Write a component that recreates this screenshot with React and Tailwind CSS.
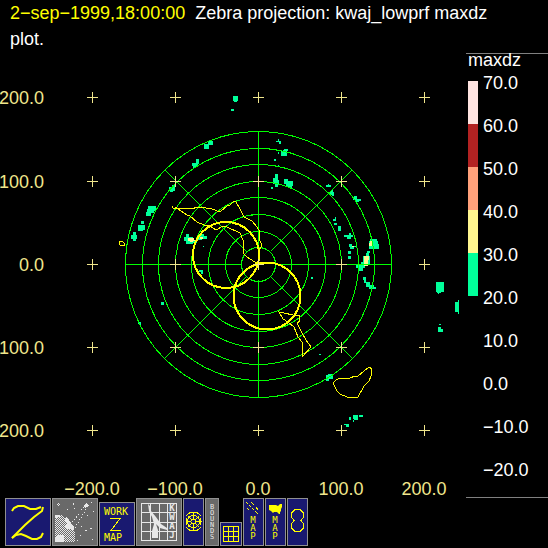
import React from 'react';

const TICKS_X = [92, 175, 258, 341, 424];
const TICKS_Y = [97, 181, 264, 347, 430];
const X_LABELS = ['−200.0', '−100.0', '0.0', '100.0', '200.0'];
const Y_LABELS = ['200.0', '100.0', '0.0', '100.0', '200.0'];
const RINGS = [17, 33, 50, 67, 83, 100, 116, 133];

const LEGEND = ['70.0', '60.0', '50.0', '40.0', '30.0', '20.0', '10.0', '0.0', '−10.0', '−20.0'];

// echo cells: x, y, width, height
const ECHOES = [
  [233, 96, 5, 5], [234, 101, 3, 1], [231, 109, 3, 2],
  [208, 141, 5, 4], [204, 144, 5, 5],
  [196, 159, 3, 5], [192, 163, 6, 3], [193, 166, 3, 2],
  [172, 185, 3, 4], [169, 187, 6, 4], [170, 191, 3, 1],
  [148, 206, 8, 5], [147, 209, 7, 4], [146, 212, 5, 4],
  [141, 221, 3, 3], [138, 225, 7, 5], [138, 230, 5, 1],
  [133, 232, 3, 3], [131, 235, 6, 4], [133, 238, 3, 3],
  [186, 234, 3, 3], [184, 237, 9, 4], [186, 240, 7, 4], [193, 240, 4, 3],
  [201, 234, 3, 3], [199, 236, 8, 3], [198, 238, 4, 2], [203, 246, 1, 1],
  [278, 139, 1, 3], [276, 141, 5, 1], [279, 142, 2, 2],
  [284, 149, 4, 2], [281, 151, 6, 5], [283, 150, 4, 5], [278, 152, 1, 2],
  [274, 159, 2, 2], [278, 165, 1, 2],
  [275, 174, 3, 4], [273, 178, 5, 6], [275, 184, 3, 3], [278, 180, 1, 5], [271, 187, 2, 2],
  [284, 179, 4, 5], [286, 181, 7, 5], [288, 185, 4, 3],
  [328, 184, 1, 1], [326, 185, 5, 2], [331, 190, 2, 2], [330, 192, 4, 3], [332, 195, 2, 1],
  [354, 196, 3, 1], [353, 197, 4, 3], [356, 199, 5, 2], [355, 200, 4, 2],
  [335, 217, 1, 2], [333, 219, 3, 2], [334, 223, 3, 2], [338, 226, 3, 5],
  [349, 233, 2, 2], [344, 235, 5, 2], [348, 235, 5, 2], [347, 237, 4, 2],
  [349, 244, 3, 2], [349, 246, 7, 1], [350, 246, 4, 3], [348, 251, 3, 3], [348, 256, 3, 3],
  [370, 239, 7, 3], [369, 241, 9, 4], [369, 245, 8, 4], [375, 244, 4, 5],
  [367, 251, 3, 2], [366, 253, 3, 4], [363, 256, 7, 8],
  [356, 264, 9, 4], [358, 267, 5, 4], [361, 262, 8, 3],
  [363, 277, 3, 3], [364, 280, 2, 3], [366, 282, 4, 5], [369, 285, 5, 4], [372, 287, 4, 2],
  [311, 277, 2, 2], [319, 354, 2, 1],
  [328, 374, 5, 2], [326, 375, 7, 4], [326, 379, 3, 2],
  [199, 270, 4, 2], [201, 272, 2, 2], [161, 302, 3, 3], [138, 323, 2, 1], [139, 322, 2, 3],
  [436, 282, 8, 10], [437, 292, 4, 1], [438, 293, 1, 1],
  [455, 302, 3, 10], [458, 300, 1, 14],
  [439, 324, 2, 1], [438, 327, 3, 5], [441, 329, 2, 3],
  [353, 415, 5, 4], [354, 419, 4, 1], [353, 420, 1, 2], [359, 415, 4, 2], [349, 417, 2, 3],
  [344, 424, 5, 1], [346, 425, 3, 2],
];

const STRONG_ECHOES = [
  [188, 238, 6, 3], [190, 240, 3, 2], [200, 237, 3, 2], [194, 240, 2, 1],
  [352, 246, 2, 1], [370, 241, 3, 4], [369, 243, 4, 3],
  [364, 256, 5, 4], [364, 260, 4, 6], [366, 256, 2, 5],
];

const COASTS = [
  'M172 206L173 208L177 208L190 209L199 207L212 209L220 212L227 206L230 205L234 201L236 202L240 209L244 217L252 221L257 227L260 232L259 238L262 246L259 250',
  'M175 207L187 215L190 216L197 222L204 225L210 226L216 230L223 226L227 227L240 233L243 240L243 253L247 257L258 264',
  'M119 242L121 241L123 242L125 244L124 246L120 245Z',
  'M279 312L284 313L293 315L299 315L300 321L297 323L301 331L306 340L311 347L302 357L302 342L298 337L294 327L288 322L283 319Z',
  'M333 383L336 380L340 378L350 378L355 376L357 377L364 371L369 367L372 369L371 376L369 381L364 386L358 397L347 397L340 394L337 391Z',
];

const Cells = ({ data, fill }) => (
  <g fill={fill}>
    {data.map(([x, y, w, h], i) => (
      <rect key={i} x={x} y={y} width={w} height={h} />
    ))}
  </g>
);

const RadarPlot = () => (
  <svg
    viewBox="0 52 466 446"
    className="block w-full font-['Liberation_Sans',Arial,sans-serif] text-[18px]"
    shapeRendering="crispEdges"
    role="img"
    aria-label="Radar plot"
  >
    <Cells data={ECHOES} fill="#00ff9a" />
    <Cells data={STRONG_ECHOES} fill="#fff68f" />

    <g stroke="#00ff00" fill="none">
      {RINGS.map((r) => (
        <circle key={r} cx="258.5" cy="264.5" r={r} />
      ))}
      <path d="M258.5 131V248M258.5 280V398M125 264.5H242M275 264.5H392" />
      <path d="M165 170L247 252M352 170L271 251M165 358L247 276M352 358L271 277" />
    </g>

    <g stroke="#ffff00" fill="none">
      {COASTS.map((d) => (
        <path key={d} d={d} />
      ))}
      <circle cx="226" cy="255" r="33" strokeWidth="2" />
      <circle cx="267" cy="296" r="33.5" strokeWidth="2" />
    </g>

    <g stroke="#f0e68c">
      {TICKS_Y.map((y) =>
        TICKS_X.map((x) => (
          <path key={`${x}-${y}`} d={`M${x - 5} ${y + 0.5}h11M${x + 0.5} ${y - 5}v11`} />
        ))
      )}
    </g>

    <g fill="#f0e68c">
      {Y_LABELS.map((label, i) => (
        <text key={i} x="44" y={TICKS_Y[i] + 7} textAnchor="end">{label}</text>
      ))}
      {X_LABELS.map((label, i) => (
        <text key={i} x={TICKS_X[i]} y="495" textAnchor="middle">{label}</text>
      ))}
    </g>
  </svg>
);

const Legend = () => (
  <aside className="mt-px w-[82px] shrink-0 border-y border-[#808080] pb-5 pl-0.5">
    <h2 className="mb-2.5 leading-3">maxdz</h2>
    <div className="flex gap-[5px]">
      <div className="mt-[5px] w-2.5">
        <div className="h-[43px] bg-[#ffe4e1]" />
        <div className="h-[43px] bg-[#b22222]" />
        <div className="h-[43px] bg-[#ffa07a]" />
        <div className="h-[43px] bg-[#fff68f]" />
        <div className="h-[43px] bg-[#00ff9a]" />
      </div>
      <ul className="flex flex-col gap-[29px] leading-[14px]">
        {LEGEND.map((value) => (
          <li key={value}>{value}</li>
        ))}
      </ul>
    </div>
  </aside>
);

const IconButton = ({ label, className, children }) => (
  <button
    type="button"
    aria-label={label}
    className={`shrink-0 border border-[#909090] font-['DejaVu_Sans_Mono',monospace] ${className}`}
  >
    {children}
  </button>
);

// letters stacked one below the other
const Stack = ({ word, x, y, step, ...rest }) => (
  <text textAnchor="middle" {...rest}>
    {word.split('').map((c, i) => (
      <tspan key={i} x={x} y={y + i * step}>{c}</tspan>
    ))}
  </text>
);

const Toolbar = () => (
  <nav className="flex items-end gap-px pb-0.5 pl-[5px]">
    <IconButton label="Zebra" className="h-12 w-[46px] bg-[#191970]">
      <svg viewBox="1 1 44 46" className="block w-full" fill="none" stroke="#ffff00">
        <path strokeWidth="2" d="M7 13L9 10L13 8H19L25 11H31L36 9" />
        <path strokeWidth="2" d="M38 9L37 13L29 19L20 27L12 35L7 40" />
        <path strokeWidth="2" d="M7 40L11 37L16 36L21 38L27 41H32L36 39L38 35" />
      </svg>
    </IconButton>

    <IconButton label="Satellite" className="h-12 w-[46px] bg-[#696969]">
      <svg viewBox="1 1 44 46" className="block w-full" shapeRendering="crispEdges">
        <defs>
          <pattern id="dither" width="2" height="2" patternUnits="userSpaceOnUse">
            <rect width="1" height="1" fill="#e8e8e8" />
            <rect x="1" y="1" width="1" height="1" fill="#e8e8e8" />
          </pattern>
        </defs>
        <path fill="url(#dither)" d="M3 17H9L14 20L19 25L22 31L23 37V44H3Z" />
        <g fill="#e8e8e8">
          <path d="M3 17H8V19H6V20H3ZM14 19L17 21L18 24L22 29V32L18 31H14L13 27L15 25L13 22ZM5 37H10L12 39V44H3V39Z" />
          <path d="M34 5L36 7L37 8L35 9L33 10L32 7Z" />
          <path d="M21 5h1v2h-1zM15 11h1v1h-1zM22 10h1v1h-1zM39 4h1v1h-1zM41 13h1v1h-1zM35 17h1v1h-1zM38 30h2v1h-2zM29 28h1v1h-1zM25 42h1v1h-1zM33 32h2v1h-2zM40 41h1v1h-1zM28 37h1v1h-1zM6 5h1v1h-1zM5 6h1v1h-1zM7 6h1v1h-1zM6 7h1v1h-1z" />
        </g>
        <path stroke="#e8e8e8" strokeDasharray="1 2" fill="none" d="M32 9L20 25M34 11L23 30" />
      </svg>
    </IconButton>

    <IconButton label="Work map" className="h-11 w-9 bg-[#191970]">
      <svg viewBox="1 1 34 42" className="block w-full" fill="#ffff00">
        <text x="5" y="13" fontSize="10">WORK</text>
        <path fill="none" stroke="#ffff00" shapeRendering="crispEdges" d="M11 16.5H21L12 28.5H22" />
        <text x="5" y="39" fontSize="10">MAP</text>
      </svg>
    </IconButton>

    <IconButton label="Kwajalein radar" className="h-12 w-[46px] bg-[#696969]">
      <svg viewBox="1 1 44 46" className="block w-full">
        <g stroke="#e8e8e8" fill="none" shapeRendering="crispEdges">
          <path d="M5.5 5V43M14.5 5V43M23.5 5V43M31.5 5V43M40.5 5V43M5 5.5H41M5 14.5H41M5 24.5H41M5 33.5H41M5 42.5H41" />
        </g>
        <g fill="#e8e8e8">
          <path d="M12 6L14 8L15 13L20 19L25 26L31 30V32L24 30L20 26L22 32V40H16V33L18 26L16 19L13 13Z" />
          <Stack word="KWAJ" x={36} y={13} step={9} fontSize="9" fontWeight="700" />
        </g>
      </svg>
    </IconButton>

    <IconButton label="Range rings" className="h-12 w-[21px] bg-[#191970]">
      <svg viewBox="1 1 19 46" className="block w-full" fill="none" stroke="#ffff00" shapeRendering="crispEdges">
        <circle cx="10.5" cy="23.5" r="2.5" />
        <circle cx="10.5" cy="23.5" r="6" />
        <path d="M10.5 15V21M10.5 26V33M3 23.5H8M13 23.5H19M5 18L9 22M16 18L12 22M5 29L9 25M16 29L12 25" />
        <path d="M5 15.5L8 14.5H13L16 15.5M3.5 20V27M17.5 20V27M5 31.5L8 32.5H13L16 31.5M3 18L6 15M18 18L15 15M3 29L6 32M18 29L15 32" />
      </svg>
    </IconButton>

    <IconButton label="Bounds" className="h-12 w-3.5 bg-[#696969]">
      <svg viewBox="1 1 12 46" className="block w-full" fill="#e8e8e8">
        <Stack word="BOUNDS" x={7} y={11} step={6} fontSize="7" />
      </svg>
    </IconButton>

    <IconButton label="Grid" className="h-6 w-[22px] bg-[#191970]">
      <svg viewBox="1 1 20 22" className="block w-full" fill="none" stroke="#ffff00" shapeRendering="crispEdges">
        <path d="M3.5 4V20M8.5 4V20M13.5 4V20M18.5 4V20M3 4.5H19M3 9.5H19M3 14.5H19M3 19.5H19" />
      </svg>
    </IconButton>

    <IconButton label="Track map" className="h-12 w-[21px] bg-[#191970]">
      <svg viewBox="1 1 19 46" className="block w-full" fill="#ffff00">
        <path
          fill="none"
          stroke="#ffff00"
          shapeRendering="crispEdges"
          d="M3 4L5 6M6 7L8 9M9 10L11 12M8 4L11 7M13 9L15 12M12 13L15 16M4 10L6 12"
        />
        <Stack word="MAP" x={10} y={25} step={8} fontSize="9" />
      </svg>
    </IconButton>

    <IconButton label="US map" className="h-12 w-[21px] bg-[#191970]">
      <svg viewBox="1 1 19 46" className="block w-full" fill="#ffff00">
        <path d="M4 7H11L13 8L15 6H17V9L16 11V13L15 14V16H14L12 14H9L8 15L6 13L4 12Z" />
        <Stack word="MAP" x={10} y={25} step={8} fontSize="9" />
      </svg>
    </IconButton>

    <IconButton label="Dual lobes" className="h-12 w-[21px] bg-[#191970]">
      <svg viewBox="1 1 19 46" className="block w-full" fill="none" stroke="#ffff00" shapeRendering="crispEdges">
        <path d="M8 11.5H13L16.5 15V19L14 22.5L16.5 26V30L13 33.5H8L4.5 30V26L7 22.5L4.5 19V15Z" />
      </svg>
    </IconButton>
  </nav>
);

const App = () => (
  <main className="min-h-screen bg-black font-['Liberation_Sans',Arial,sans-serif] text-[18px] text-white">
    <h1 className="pl-2.5 pr-10 leading-[26px]">
      <span className="text-[#ffff00]">2−sep−1999,18:00:00</span>&nbsp; Zebra projection: kwaj_lowprf maxdz plot.
    </h1>
    <div className="flex">
      <div className="min-w-0 flex-1">
        <RadarPlot />
      </div>
      <Legend />
    </div>
    <Toolbar />
  </main>
);

export default App;
